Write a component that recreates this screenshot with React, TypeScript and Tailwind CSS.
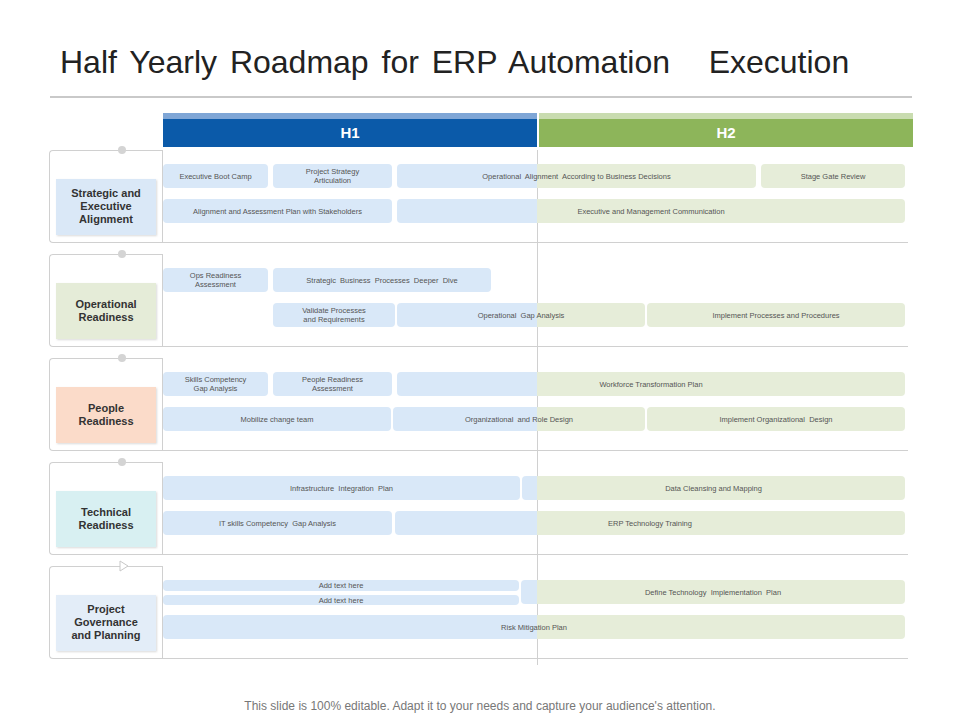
const DIV = 537;
const X0 = 163;

type Bar = { t: string; x1: number; x2: number; y: number; h?: number };
type Section = { label: string; bg: string; top: number; h: number; arrow?: boolean; bars: Bar[] };

const sections: Section[] = [
  {
    label: "Strategic and Executive Alignment", bg: "bg-[#dae8f7]", top: 150, h: 93,
    bars: [
      { t: "Executive Boot Camp", x1: 163, x2: 268, y: 164 },
      { t: "Project Strategy\nArticulation", x1: 273, x2: 392, y: 164 },
      { t: "Operational  Alignment  According to Business Decisions", x1: 397, x2: 756, y: 164 },
      { t: "Stage Gate Review", x1: 761, x2: 905, y: 164 },
      { t: "Alignment and Assessment Plan with Stakeholders", x1: 163, x2: 392, y: 199 },
      { t: "Executive and Management Communication", x1: 397, x2: 905, y: 199 },
    ],
  },
  {
    label: "Operational Readiness", bg: "bg-[#e5ecd8]", top: 254, h: 93,
    bars: [
      { t: "Ops Readiness\nAssessment", x1: 163, x2: 268, y: 268 },
      { t: "Strategic  Business  Processes  Deeper  Dive", x1: 273, x2: 491, y: 268 },
      { t: "Validate Processes\nand Requirements", x1: 273, x2: 395, y: 303 },
      { t: "Operational  Gap Analysis", x1: 397, x2: 645, y: 303 },
      { t: "Implement Processes and Procedures", x1: 647, x2: 905, y: 303 },
    ],
  },
  {
    label: "People Readiness", bg: "bg-[#fbdbc9]", top: 358, h: 93,
    bars: [
      { t: "Skills Competency\nGap Analysis", x1: 163, x2: 268, y: 372 },
      { t: "People Readiness\nAssessment", x1: 273, x2: 392, y: 372 },
      { t: "Workforce Transformation Plan", x1: 397, x2: 905, y: 372 },
      { t: "Mobilize change team", x1: 163, x2: 391, y: 407 },
      { t: "Organizational  and Role Design", x1: 393, x2: 645, y: 407 },
      { t: "Implement Organizational  Design", x1: 647, x2: 905, y: 407 },
    ],
  },
  {
    label: "Technical Readiness", bg: "bg-[#d8f0f2]", top: 462, h: 93,
    bars: [
      { t: "Infrastructure  Integration  Plan", x1: 163, x2: 520, y: 476 },
      { t: "Data Cleansing and Mapping", x1: 522, x2: 905, y: 476 },
      { t: "IT skills Competency  Gap Analysis", x1: 163, x2: 392, y: 511 },
      { t: "ERP Technology Training", x1: 395, x2: 905, y: 511 },
    ],
  },
  {
    label: "Project Governance and Planning", bg: "bg-[#e3edf8]", top: 566, h: 93, arrow: true,
    bars: [
      { t: "Add text here", x1: 163, x2: 519, y: 580, h: 11 },
      { t: "Add text here", x1: 163, x2: 519, y: 595, h: 10 },
      { t: "Define Technology  Implementation  Plan", x1: 521, x2: 905, y: 580 },
      { t: "Risk Mitigation Plan", x1: 163, x2: 905, y: 615 },
    ],
  },
];

function GanttBar({ bar, top }: { bar: Bar; top: number }) {
  const w = bar.x2 - bar.x1;
  const blue = "#d9e8f8";
  const green = "#e6edd9";
  let bg = blue;
  if (bar.x1 >= DIV) bg = green;
  else if (bar.x2 > DIV) {
    const p = ((DIV - bar.x1) / w) * 100;
    bg = `linear-gradient(to right, ${blue} ${p}%, ${green} ${p}%)`;
  }
  const h = bar.h ?? 24;
  return (
    <div
      className="absolute flex items-center justify-center rounded-[4px] text-center text-[7.5px] leading-[9px] text-[#555] whitespace-pre-wrap"
      style={{ left: bar.x1 - X0, width: w, top: bar.y - top, height: h, background: bg }}
    >
      {bar.t}
    </div>
  );
}

function Row({ s }: { s: Section }) {
  return (
    <div className="flex" style={{ height: s.h }}>
      <div className="relative w-[113px] ml-[49px] flex items-center">
        <div className="absolute left-0 top-0 bottom-0 w-[113px] rounded-l-[4px] border border-r-0 border-[#d0d0d0]" />
        {s.arrow ? (
          <svg className="absolute left-[70px] -top-[6px]" width="10" height="12" viewBox="0 0 10 12">
            <path d="M1 1 L9 6 L1 11 Z" fill="white" stroke="#c8c8c8" />
          </svg>
        ) : (
          <div className="absolute left-[69px] -top-[4px] w-[8px] h-[8px] rounded-full bg-[#d4d4d4]" />
        )}
        <div className={`relative ml-[7px] mt-[20px] w-[100px] h-[56px] px-[12px] ${s.bg} shadow-[1px_1px_2px_rgba(0,0,0,0.15)] flex items-center justify-center text-center text-[11px] font-bold leading-[13px] text-[#333]`}>
          {s.label}
        </div>
      </div>
      <div className="relative w-[746px] border-l border-b border-[#d0d0d0]">
        {s.bars.map((b, i) => (
          <GanttBar key={i} bar={b} top={s.top} />
        ))}
      </div>
    </div>
  );
}

export default function App() {
  return (
    <div className="w-[960px] h-[720px] bg-white relative overflow-hidden" style={{ fontFamily: "'Liberation Sans', Arial, sans-serif" }}>
      <div className="pt-[42px] pl-[60px] text-[32px] text-[#222] leading-[40px] [word-spacing:4px]">
        Half Yearly Roadmap for ERP Automation&nbsp;&nbsp; Execution
      </div>
      <div className="mt-[14px] ml-[50px] w-[862px] h-[2px] bg-[#c9c9c9]" />
      <div className="mt-[15px] ml-[163px] flex w-[750px]">
        <div className="w-[374px]">
          <div className="h-[6px] bg-[#7fa6d6]" />
          <div className="h-[28px] bg-[#0b5aa9] text-white font-bold text-[15px] flex items-center justify-center">H1</div>
        </div>
        <div className="w-[2px] bg-white" />
        <div className="flex-1">
          <div className="h-[6px] bg-[#c9dcb0]" />
          <div className="h-[28px] bg-[#8db55a] text-white font-bold text-[15px] flex items-center justify-center">H2</div>
        </div>
      </div>
      <div className="relative mt-[3px] flex flex-col gap-[11px]">
        <div className="absolute left-[537px] top-0 h-[515px] w-px bg-[#d0d0d0]" />
        {sections.map((s) => (
          <Row key={s.label} s={s} />
        ))}
      </div>
      <div className="absolute bottom-[5px] left-0 right-0 text-center text-[12px] text-[#777]">
        This slide is 100% editable. Adapt it to your needs and capture your audience's attention.
      </div>
    </div>
  );
}
